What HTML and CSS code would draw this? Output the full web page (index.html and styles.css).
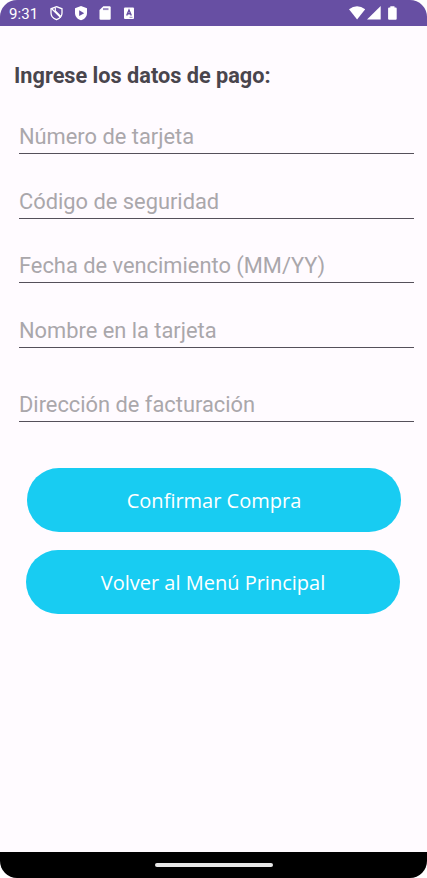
FILE: index.html
```html
<!DOCTYPE html>
<html lang="es">
<head>
<meta charset="utf-8">
<title>Datos de pago</title>
<link rel="stylesheet" href="styles.css">
</head>
<body>
<div class="phone">
  <header class="status">
    <span class="clock">9:31</span>
    <svg class="status-icons" width="90" height="18" viewBox="48 4 90 18">
      <path d="M56.500 6.700 62 8.800V13c0 3.200-2.200 5.600-5.500 6.700-3.300-1.100-5.500-3.500-5.500-6.700V8.800Z" fill="none" stroke="#fff" stroke-width="1.300"/>
      <path d="m51.500 8.500 9.200 9.200M55.300 7.500v3.300l5.500 5.500" fill="none" stroke="#fff" stroke-width="1.200"/>
      <path d="M81 6 87 8.300V13c0 3.500-2.400 6.200-6 7.300-3.600-1.100-6-3.800-6-7.300V8.300Z" fill="#fff"/>
      <path d="m79.200 10.300 5 2.900-5 2.900Z" fill="#674fa3"/>
      <path d="M103.300 6.300h6.200q1.200 0 1.200 1.200v11q0 1.200-1.200 1.200h-8.800q-1.200 0-1.200-1.200V10Z" fill="#fff"/>
      <path d="M103 9.100h5.500" stroke="#674fa3" stroke-width="2" opacity=".65"/>
      <rect x="124" y="7.500" width="10" height="11.500" rx="1" fill="#fff"/>
      <path d="m126.700 15.500 2.300-5.500 2.300 5.500M127.500 13.700h3" fill="none" stroke="#674fa3" stroke-width="1.400"/>
      <path d="M129.500 17.300h3" stroke="#674fa3" stroke-width=".7"/>
    </svg>
    <svg class="signal-icons" width="52" height="18" viewBox="347 4 52 18">
      <path d="M349 9.300Q357 3.200 365.200 9.300L357.100 19.500Z" fill="#fff"/>
      <path d="M380.700 6v13.500H367Z" fill="#fff"/>
      <path d="M390.300 6.200h4.200v1.300h1.200q1 0 1 1v10.200q0 1-1 1h-6.600q-1 0-1-1V8.500q0-1 1-1h1.200Z" fill="#fff"/>
    </svg>
  </header>
  <main class="content">
    <h1 class="title">Ingrese los datos de pago:</h1>
    <form class="form">
      <div class="field">Número de tarjeta</div>
      <div class="field">Código de seguridad</div>
      <div class="field">Fecha de vencimiento (MM/YY)</div>
      <div class="field">Nombre en la tarjeta</div>
      <div class="field field-address">Dirección de facturación</div>
      <button class="button" type="button">Confirmar Compra</button>
      <button class="button button-back" type="button">Volver al Menú Principal</button>
    </form>
  </main>
  <footer class="navbar"><div class="handle"></div></footer>
</div>
</body>
</html>
```
FILE: styles.css
```css
* { box-sizing: border-box; }
body { margin: 0; background: #fff; font-family: Roboto, sans-serif; }
.phone {
  width: 427px;
  height: 878px;
  display: flex;
  flex-direction: column;
  background: #fffbff;
  border-radius: 17px;
  overflow: hidden;
}
.status {
  height: 26px;
  flex: none;
  display: flex;
  align-items: center;
  padding: 0 28px 0 9px;
  background: #674fa3;
  color: #fff;
}
.clock { width: 39px; font-size: 15px; line-height: 26px; letter-spacing: .1px; padding-top: 1px; }
.signal-icons { margin-left: auto; }
.content { flex: 1; padding: 36px 13px 0 14px; }
.title {
  margin: 0;
  height: 28px;
  font-size: 21.700px;
  line-height: 28px;
  font-weight: 700;
  color: #49454d;
  white-space: nowrap;
}
.form { display: flex; flex-direction: column; padding-top: 29px; }
.field {
  height: 35px;
  margin: 0 0 29.700px 5px;
  border-bottom: 1px solid #55505a;
  font-size: 21.850px;
  line-height: 36.500px;
  color: #aaa7ab;
  white-space: nowrap;
}
.field-address { margin-top: 9.500px; margin-bottom: 46.200px; }
.button {
  width: 374px;
  height: 64px;
  margin: 0 0 18px 13px;
  padding: 2px 0 0;
  border: 0;
  border-radius: 32px;
  background: #18ccf2;
  color: #fff;
  font: 20px/62px "Open Sans", "Noto Sans", sans-serif;
}
.button-back { margin-left: 12px; }
.navbar {
  height: 26px;
  flex: none;
  display: flex;
  justify-content: center;
  align-items: center;
  background: #000;
}
.handle { width: 118px; height: 4px; border-radius: 2px; background: #e8e8e8; }
```
